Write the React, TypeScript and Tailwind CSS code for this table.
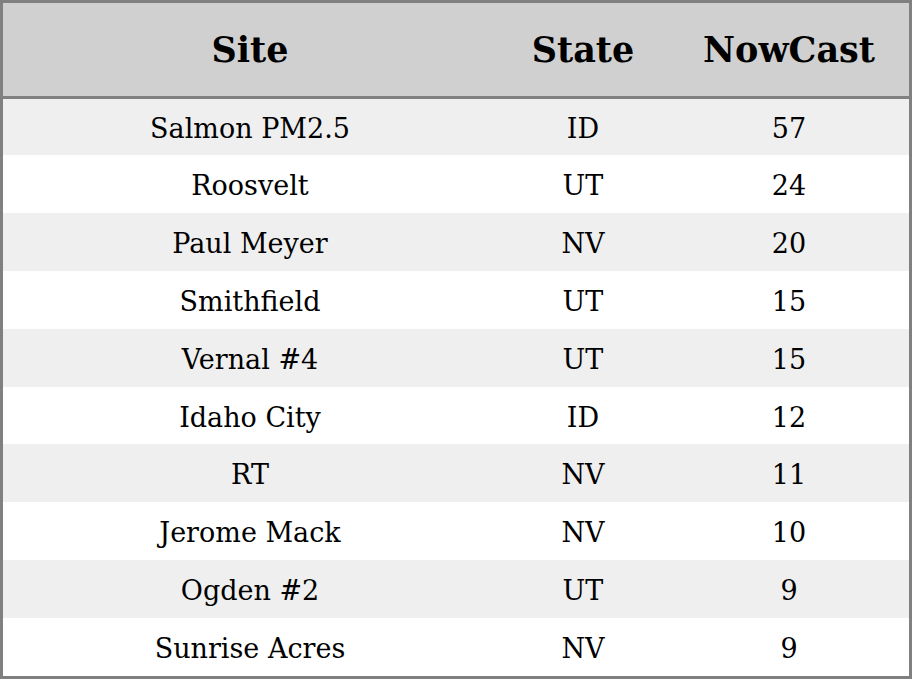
import React from "react";

const rows: [string, string, string][] = [
  ["Salmon PM2.5", "ID", "57"],
  ["Roosvelt", "UT", "24"],
  ["Paul Meyer", "NV", "20"],
  ["Smithfield", "UT", "15"],
  ["Vernal #4", "UT", "15"],
  ["Idaho City", "ID", "12"],
  ["RT", "NV", "11"],
  ["Jerome Mack", "NV", "10"],
  ["Ogden #2", "UT", "9"],
  ["Sunrise Acres", "NV", "9"],
];

export default function App() {
  return (
    <div
      className="w-[912px] h-[679px] border-[3px] border-[#808080] flex flex-col bg-white text-black"
      style={{ fontFamily: '"DejaVu Serif", serif' }}
    >
      <div className="h-[96px] shrink-0 grid grid-cols-[494px_172px_1fr] items-center bg-[#d0d0d0] border-b-[3px] border-[#808080] text-[35px] leading-none font-bold">
        <div className="text-center">Site</div>
        <div className="text-center">State</div>
        <div className="text-center">NowCast</div>
      </div>
      {rows.map((r, i) => (
        <div
          key={i}
          className={`${i === 0 ? "h-[56px] shrink-0" : "flex-1"} grid grid-cols-[494px_172px_1fr] items-center pt-[3px] text-[27px] leading-none ${
            i % 2 === 0 ? "bg-[#efefef]" : "bg-white"
          }`}
        >
          <div className="text-center">{r[0]}</div>
          <div className="text-center">{r[1]}</div>
          <div className="text-center">{r[2]}</div>
        </div>
      ))}
    </div>
  );
}
